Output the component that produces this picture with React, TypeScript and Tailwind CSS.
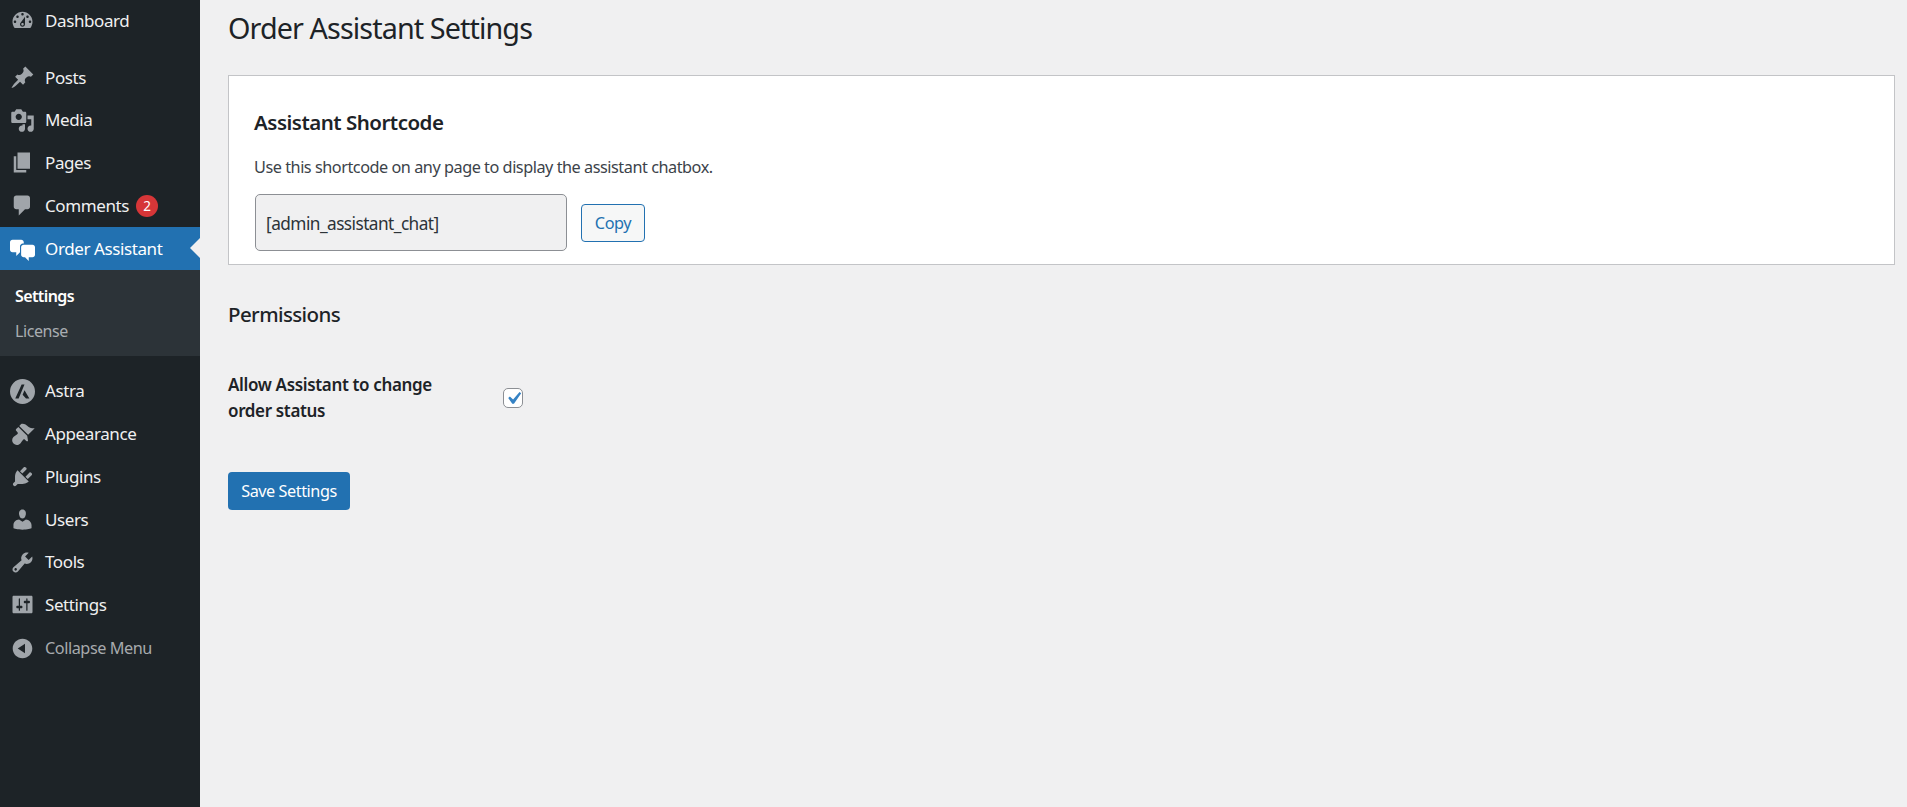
import React from 'react';

const font = { fontFamily: '"Noto Sans", "Open Sans", sans-serif' };

const icons: Record<string, React.ReactNode> = {
  dashboard: <path d="M3.76 16h12.48c1.1-1.37 1.76-3.11 1.76-5 0-4.42-3.58-8-8-8s-8 3.58-8 8c0 1.89.66 3.63 1.76 5zM10 4c.55 0 1 .45 1 1s-.45 1-1 1-1-.45-1-1 .45-1 1-1zM6 6c.55 0 1 .45 1 1s-.45 1-1 1-1-.45-1-1 .45-1 1-1zm8 0c.55 0 1 .45 1 1s-.45 1-1 1-1-.45-1-1 .45-1 1-1zm-5.37 5.55L12 7v6c0 1.1-.9 2-2 2s-2-.9-2-2c0-.57.24-1.08.63-1.45zM4 10c.55 0 1 .45 1 1s-.45 1-1 1-1-.45-1-1 .45-1 1-1zm12 0c.55 0 1 .45 1 1s-.45 1-1 1-1-.45-1-1 .45-1 1-1zm-5 3c0-.55-.45-1-1-1s-1 .45-1 1 .45 1 1 1 1-.45 1-1z" fillRule="evenodd" />,
  posts: <path d="M10.44 3.02l1.82-1.82 6.36 6.35-1.83 1.82c-1.05-.68-2.48-.57-3.41.36l-.75.75c-.92.93-1.04 2.35-.35 3.41l-1.83 1.82-2.41-2.41-2.8 2.79c-.42.42-3.38 2.71-3.8 2.29s1.86-3.39 2.28-3.81l2.79-2.79L4.1 9.36l1.83-1.82c1.05.69 2.48.57 3.4-.36l.75-.75c.93-.92 1.05-2.35.36-3.41z" />,
  media: <path d="M13 11V4c0-.55-.45-1-1-1h-1.67L9 1H5L3.67 3H2c-.55 0-1 .45-1 1v7c0 .55.45 1 1 1h10c.55 0 1-.45 1-1zM7 4.5c1.38 0 2.5 1.12 2.5 2.5S8.38 9.5 7 9.5 4.5 8.38 4.5 7 5.62 4.5 7 4.5zM14 6h5v10.5c0 1.38-1.12 2.5-2.5 2.5S14 17.88 14 16.5s1.12-2.5 2.5-2.5c.17 0 .34.02.5.05V9h-3V6zm-4 8.05V13h2v3.5c0 1.38-1.12 2.5-2.5 2.5S7 17.88 7 16.5 8.12 14 9.5 14c.17 0 .34.02.5.05z" fillRule="evenodd" />,
  pages: <path d="M6 15V2h10v13H6zm-1 1h8v2H3V5h2v11z" />,
  comments: <path d="M5 2h9c1.1 0 2 .9 2 2v7c0 1.1-.9 2-2 2h-2l-5 5v-5H5c-1.1 0-2-.9-2-2V4c0-1.1.9-2 2-2z" />,
  chat: <path d="M11 6h-.82C9.07 6 8 7.2 8 8.16V13l-3 3v-3H2c-1.1 0-2-.9-2-2V5c0-1.1.9-2 2-2h7c1.1 0 2 .9 2 2v1zm0 1h7c1.1 0 2 .9 2 2v6c0 1.1-.9 2-2 2h-3v3l-3-3h-1c-1.1 0-2.1-1-2.1-1.84V9c0-1.1.9-2 2.1-2z" />,
  astra: <path d="M10 0a10 10 0 1 0 0 20 10 10 0 0 0 0-20zM9.3 4.3h2.3l-4.7 11.3H4.2zM11.6 9l3.9 6.6h-2.7l-2.7-3z" fillRule="evenodd" />,
  appearance: <path d="M14.48 11.06L7.41 3.99l1.5-1.5c.5-.56 2.3-.47 3.51.32 1.21.8 1.43 1.28 2.91 2.1 1.18.64 2.45 1.26 4.45.85zm-.71.71L6.7 4.7 4.93 6.47c-.39.39-.39 1.02 0 1.41l1.06 1.06c.39.39.39 1.03 0 1.42-.6.6-1.43 1.11-2.21 1.69-.35.26-.7.53-1.01.84-1.43 1.43-1.4 3.75.05 5.2 1.45 1.45 3.77 1.48 5.2.05.31-.31.58-.66.84-1.01.58-.78 1.09-1.61 1.69-2.21.39-.39 1.03-.39 1.42 0l1.06 1.06c.39.39 1.02.39 1.41 0z" />,
  plugins: <path d="M13.11 4.36L9.87 7.6 8 5.73l3.24-3.24c.35-.34 1.05-.2 1.56.32.52.51.66 1.21.31 1.55zm-8 1.77l.91-1.12 9.01 9.01-1.19.84c-.71.71-2.63 1.16-3.82 1.16H6.14L4.9 17.26c-.59.59-1.54.59-2.12 0-.59-.58-.59-1.53 0-2.12l1.24-1.24v-3.88c0-1.13.4-3.19 1.09-3.89zm7.26 3.97l3.24-3.24c.34-.35 1.04-.21 1.55.31.52.51.66 1.21.31 1.55l-3.24 3.25z" />,
  users: <path d="M10 9.25c-2.27 0-2.73-3.44-2.73-3.44C7 4.02 7.82 2 9.97 2c2.16 0 2.98 2.02 2.71 3.81 0 0-.41 3.44-2.68 3.44zm0 2.57L12.72 10c2.39 0 4.52 2.33 4.52 4.53v2.49s-3.65 1.13-7.24 1.13c-3.65 0-7.24-1.13-7.24-1.13v-2.49c0-2.25 1.94-4.48 4.47-4.48z" />,
  tools: <path d="M16.68 9.77c-1.34 1.34-3.3 1.67-4.95.99l-5.41 6.52c-.99.99-2.59.99-3.58 0s-.99-2.59 0-3.57l6.52-5.42c-.68-1.65-.35-3.61.99-4.95 1.28-1.28 3.12-1.62 4.72-1.06l-2.89 2.89 2.82 2.82 2.86-2.87c.53 1.58.18 3.39-1.08 4.65zM3.81 16.21c.4.39 1.04.39 1.43 0 .4-.4.4-1.04 0-1.43-.39-.4-1.03-.4-1.43 0-.39.39-.39 1.03 0 1.43z" fillRule="evenodd" />,
  settings: <path d="M18 16V4c0-.55-.45-1-1-1H3c-.55 0-1 .45-1 1v12c0 .55.45 1 1 1h14c.55 0 1-.45 1-1zM8 11h1c.55 0 1 .45 1 1s-.45 1-1 1H8v1.5c0 .28-.22.5-.5.5s-.5-.22-.5-.5V13H6c-.55 0-1-.45-1-1s.45-1 1-1h1V5.5c0-.28.22-.5.5-.5s.5.22.5.5V11zm5-2h-1c-.55 0-1-.45-1-1s.45-1 1-1h1V5.5c0-.28.22-.5.5-.5s.5.22.5.5V7h1c.55 0 1 .45 1 1s-.45 1-1 1h-1v5.5c0 .28-.22.5-.5.5s-.5-.22-.5-.5V9z" fillRule="evenodd" />,
  collapse: <path d="M10 2.16c4.33 0 7.84 3.51 7.84 7.84s-3.51 7.84-7.84 7.84S2.16 14.33 2.16 10 5.71 2.16 10 2.16zm2 11.72V6.12L6.18 9.97z" fillRule="evenodd" />,
};

const MenuItem = ({ icon, label, badge, active, first }: { icon: string; label: string; badge?: string; active?: boolean; first?: boolean }) => (
  <div className={`relative flex items-center ${first ? 'h-[41px]' : 'h-[42.75px]'} ${active ? 'bg-[#2271b1] text-white' : 'text-[#f0f0f1]'}`}>
    <div className="flex w-[45px] shrink-0 justify-center">
      <svg viewBox="0 0 20 20" className={`h-[25px] w-[25px] ${active ? 'fill-white' : 'fill-[#a0a5aa]'}`}>
        {icons[icon]}
      </svg>
    </div>
    <span className="text-[17px] tracking-[-0.4px]">{label}</span>
    {badge && (
      <span className="ml-[7px] flex h-[22px] w-[22px] items-center justify-center rounded-full bg-[#d63638] text-[13.5px] text-white">
        {badge}
      </span>
    )}
    {active && (
      <div className="absolute right-0 top-1/2 h-0 w-0 -translate-y-1/2 border-y-[10px] border-r-[10px] border-y-transparent border-r-[#f0f0f1]" />
    )}
  </div>
);

export default function App() {
  return (
    <div className="flex h-[807px] overflow-hidden bg-[#f0f0f1]" style={font}>
      {/* Sidebar */}
      <aside className="w-[200px] shrink-0 bg-[#1d2327]">
        <MenuItem icon="dashboard" label="Dashboard" first />
        <div className="h-[15px]" />
        <MenuItem icon="posts" label="Posts" />
        <MenuItem icon="media" label="Media" />
        <MenuItem icon="pages" label="Pages" />
        <MenuItem icon="comments" label="Comments" badge="2" />
        <MenuItem icon="chat" label="Order Assistant" active />
        <div className="flex h-[86px] flex-col justify-center gap-[11px] bg-[#2c3338] pl-[15px] pt-[2px] text-[16px] leading-[24px]">
          <div className="font-semibold tracking-[-0.6px] text-white">Settings</div>
          <div className="tracking-[-0.4px] text-[#a9adb1]">License</div>
        </div>
        <div className="h-[14px]" />
        <MenuItem icon="astra" label="Astra" />
        <MenuItem icon="appearance" label="Appearance" />
        <MenuItem icon="plugins" label="Plugins" />
        <MenuItem icon="users" label="Users" />
        <MenuItem icon="tools" label="Tools" />
        <MenuItem icon="settings" label="Settings" />
        <div className="flex h-[43.75px] items-center pt-[1px] text-[#a7aaad]">
          <div className="flex w-[45px] shrink-0 justify-center">
            <svg viewBox="0 0 20 20" className="h-[25px] w-[25px] fill-[#a0a5aa]">
              {icons.collapse}
            </svg>
          </div>
          <span className="text-[16.25px] tracking-[-0.45px]">Collapse Menu</span>
        </div>
      </aside>

      {/* Main */}
      <main className="flex-1 pl-[28px] pr-[12px]">
        <h1 className="pt-[8px] text-[28.75px] leading-[40px] tracking-[-0.9px] text-[#1d2327]">Order Assistant Settings</h1>

        <section className="mt-[27px] h-[190px] border border-[#c3c4c7] bg-white pl-[25px] pt-[31px]">
          <h2 className="text-[20.5px] font-semibold leading-[30px] tracking-[-0.5px] text-[#1d2327]">Assistant Shortcode</h2>
          <p className="mt-[18px] text-[16.25px] leading-[24px] tracking-[-0.47px] text-[#3c434a]">
            Use this shortcode on any page to display the assistant chatbox.
          </p>
          <div className="mt-[15px] flex items-center">
            <div className="ml-[1px] flex h-[57px] w-[312px] items-center rounded-[5px] border border-[#8c8f94] bg-[#f0f0f1] pl-[10px] pt-[2px] text-[17.25px] tracking-[-0.55px] text-[#2c3338]">
              [admin_assistant_chat]
            </div>
            <button className="ml-[14px] mt-[1px] flex h-[38px] w-[64px] items-center justify-center rounded-[4px] border border-[#2271b1] bg-[#f6f7f7] text-[16.25px] tracking-[-0.45px] text-[#2271b1]">
              Copy
            </button>
          </div>
        </section>

        <h2 className="mt-[34px] text-[20.5px] font-medium leading-[30px] tracking-[-0.6px] text-[#1d2327]">Permissions</h2>

        <div className="mt-[43px] flex items-center">
          <div className="w-[275px] text-[17px] font-semibold leading-[26px] tracking-[-0.35px] text-[#1d2327]">
            <div>Allow Assistant to change</div>
            <div>order status</div>
          </div>
          <div className="flex h-[20px] w-[20px] items-center justify-center rounded-[5px] border border-[#8c8f94] bg-white">
            <svg viewBox="0 0 20 20" className="h-[25px] w-[25px] shrink-0 fill-[#3582c4]">
              <path d="M14.83 4.89l1.34.94-5.81 8.38H9.02L5.78 9.67l1.34-1.25 2.57 2.4z" />
            </svg>
          </div>
        </div>

        <button className="mt-[48px] flex h-[38px] w-[122px] items-center justify-center rounded-[4px] bg-[#2271b1] text-[16.25px] tracking-[-0.45px] text-white">
          Save Settings
        </button>
      </main>
    </div>
  );
}
